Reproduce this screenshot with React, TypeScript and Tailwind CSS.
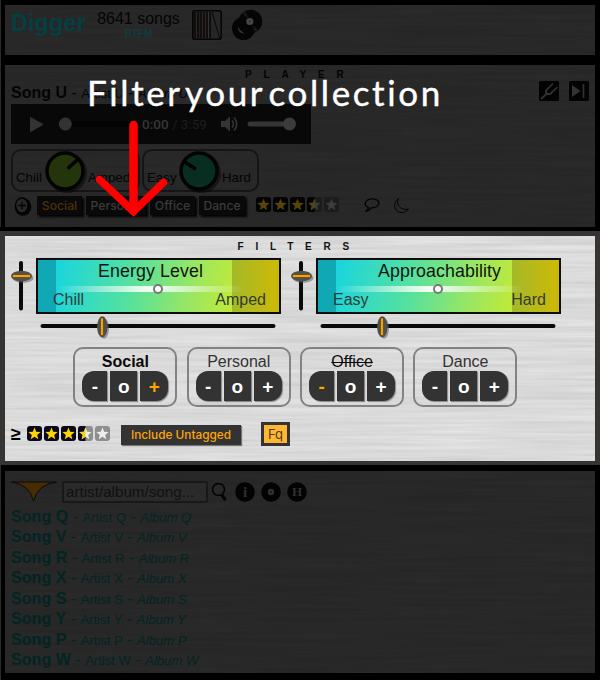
import React from "react";

const songs = ["Q", "V", "R", "X", "S", "Y", "P", "W"];

function Brushed({ id, dim }: { id: string; dim?: boolean }) {
  return (
    <svg className="pointer-events-none absolute inset-0 h-full w-full" aria-hidden="true">
      <filter id={id} x="0" y="0" width="100%" height="100%" colorInterpolationFilters="sRGB">
        <feTurbulence type="fractalNoise" baseFrequency="0.008 0.28" numOctaves="3" seed="4" />
        <feColorMatrix
          type="matrix"
          values={
            dim
              ? "0.03 0 0 0 0.141 0.03 0 0 0 0.141 0.03 0 0 0 0.141 0 0 0 0 1"
              : "0.12 0 0 0 0.8 0.12 0 0 0 0.796 0.12 0 0 0 0.796 0 0 0 0 1"
          }
        />
      </filter>
      <rect width="100%" height="100%" filter={`url(#${id})`} />
    </svg>
  );
}

const starPath = "M7.5 1.6 9.2 5.7 13.6 6 10.2 8.9 11.3 13.2 7.5 10.8 3.7 13.2 4.8 8.9 1.4 6 5.8 5.7Z";

function Stars({ dim }: { dim?: boolean }) {
  const dark = dim ? "#030303" : "#0a0a1c";
  const gold = dim ? "#57440a" : "#ffd400";
  const grey = dim ? "#1c1c1c" : "#8e8e8e";
  const pale = dim ? "#3c3c3c" : "#eeeeee";
  return (
    <div className="flex gap-[2px]">
      {[1, 1, 1, 0.5, 0].map((v, i) => (
        <svg key={i} width="15" height="15" viewBox="0 0 15 15">
          <rect width="15" height="15" rx="3" fill={v === 1 ? dark : grey} />
          {v === 0.5 && <path d="M3 0H7.5V15H3A3 3 0 0 1 0 12V3A3 3 0 0 1 3 0Z" fill={dark} />}
          <path d={starPath} fill={v === 1 ? gold : pale} />
          {v === 0.5 && <path d="M7.5 1.6V10.8L3.7 13.2 4.8 8.9 1.4 6 5.8 5.7Z" fill={gold} />}
        </svg>
      ))}
    </div>
  );
}

function Knob({ fill, angle }: { fill: string; angle: number }) {
  return (
    <svg width="44" height="44" viewBox="-21 -21 44 44" className="shrink-0">
      <circle cx="2" cy="2" r="20" fill="#000" opacity="0.45" />
      <circle r="18" fill={fill} stroke="#030303" strokeWidth="3.4" />
      <path d="M0-5V-17" stroke="#030303" strokeWidth="3.6" strokeLinecap="round" transform={`rotate(${angle})`} />
    </svg>
  );
}

function KnobBox({ low, high, fill, angle, cls }: { low: string; high: string; fill: string; angle: number; cls: string }) {
  return (
    <div className={`flex h-[43px] rounded-[10px] border-2 border-[#151515] text-[13.3px] text-[#040404] ${cls}`}>
      <span className="mt-[19px] leading-[16px]">{low}</span>
      <div className="-mt-[1px] h-[42px] w-[44px] shrink-0">
        <Knob fill={fill} angle={angle} />
      </div>
      <span className="mt-[19px] leading-[16px]">{high}</span>
    </div>
  );
}

function VSlider() {
  return (
    <svg width="28" height="56" viewBox="8 258 28 56" className="shrink-0">
      <path d="M21 263V308.500" stroke="#0a0a0a" strokeWidth="4" strokeLinecap="round" />
      <ellipse cx="23" cy="278" rx="10.500" ry="5" fill="#555" opacity=".5" />
      <ellipse cx="21.500" cy="276" rx="10.500" ry="5.200" fill="#505050" />
      <rect x="12.500" y="274.500" width="18" height="3" fill="#f5a20a" stroke="#2d2a22" strokeWidth=".5" />
    </svg>
  );
}

function FilterAxis({ name, low, high }: { name: string; low: string; high: string }) {
  return (
    <div className="w-[280px]">
      <div className="flex">
        <VSlider />
        <div className="relative h-[56px] w-[245px] border-2 border-[#0c0c0c] bg-[linear-gradient(100deg,#18d5df_7%,#58e19c_40%,#a0e75c_66%,#d1ec23_90%)]">
          <div className="absolute inset-y-0 left-0 w-[18px] bg-[#0d98a5] opacity-75" />
          <div className="absolute inset-y-0 right-0 w-[47px] bg-[linear-gradient(90deg,#a4b92a,#c8b90a_85%)]" />
          <div className="absolute top-[26px] left-[18px] h-[6px] w-[188px] bg-[linear-gradient(90deg,#ffffff00,#ffffffee_50%,#ffffff00)]" />
          <div className="absolute top-[24px] left-[115px] h-[10px] w-[10px] rounded-full border-2 border-[#777] bg-white" />
          <div className="relative pl-[60px] pt-[1px] text-[17.8px] leading-[20px] tracking-[0.1px] text-[#101410]">{name}</div>
          <div className="relative mt-[9px] flex justify-between pr-[13px] pl-[15px] text-[16px] leading-[20px] text-[#353a35]">
            <span>{low}</span>
            <span>{high}</span>
          </div>
        </div>
      </div>
      <svg width="280" height="26" viewBox="8 314 280 26" className="block">
        <path d="M42.500 326H273.500" stroke="#0a0a0a" strokeWidth="4" strokeLinecap="round" />
        <ellipse cx="104" cy="328.500" rx="5" ry="10.300" fill="#555" opacity=".5" />
        <ellipse cx="102.300" cy="326.800" rx="5.200" ry="10.500" fill="#505050" />
        <rect x="100.500" y="318" width="3" height="17.500" fill="#f5a20a" stroke="#2d2a22" strokeWidth=".5" />
      </svg>
    </div>
  );
}

function TagFilter({ name, state }: { name: string; state: string }) {
  const label =
    state === "+" ? "font-bold text-[#0a0a0a]" : state === "-" ? "line-through text-[#0a0a0a]" : "text-[#333]";
  return (
    <div className="flex h-[60px] w-[104px] flex-col items-center rounded-[10px] border-2 border-[#828282]">
      <div className={`mt-[3px] text-[16px] leading-[20px] ${label}`}>{name}</div>
      <div className="-mt-[1px] flex gap-[3px] text-[19px] leading-[31px] font-bold text-white">
        {["-", "o", "+"].map((c) => (
          <div
            key={c}
            className={`h-[30px] bg-[#333] text-center shadow-[1px_1px_1px_#888] ${
              c === "-" ? "w-[25px] rounded-l-[12px]" : c === "o" ? "w-[27px]" : "w-[28px] rounded-r-[12px]"
            } ${c === state ? "text-[#ffa500]" : ""}`}
          >
            {c}
          </div>
        ))}
      </div>
    </div>
  );
}

function Header() {
  return (
    <header className="relative h-[50px] bg-[#282828]">
      <Brushed id="metal-head" dim />
      <div className="relative flex pl-[6px]">
        <div className="w-[86px] pt-[5px] text-[23.6px] leading-[26px] font-bold text-[#043f41]">Digger</div>
        <div className="flex w-[83px] flex-col items-center pt-[5px]">
          <span className="text-[16px] leading-[18px] whitespace-nowrap text-[#040404]">8641 songs</span>
          <span className="text-[10px] leading-[11px] text-[#044648]">RTFM</span>
        </div>
        <svg width="30" height="30" viewBox="0 0 30 30" className="mt-[5px] ml-[12px]">
          <rect x=".8" y=".8" width="28.400" height="28.400" rx="2" fill="#262626" stroke="#050505" strokeWidth="1.600" />
          <path d="M3 2V28M6 2V28M9 2V28M12 2V28M15 2V28M18 2V28" stroke="#080808" strokeWidth="1.500" />
          <path d="M4.500 2V28" stroke="#35261b" />
          <path d="M7.500 2V28" stroke="#10252c" />
          <path d="M10.500 2V28M13.500 2V28" stroke="#3a2020" />
          <path d="M16.500 2V28" stroke="#3a3430" />
          <path d="M20 2 27.500 28" stroke="#080808" />
        </svg>
        <svg width="32" height="32" viewBox="0 0 32 32" className="mt-[4px] ml-[9px]">
          <circle cx="12.500" cy="19.500" r="11.500" fill="#050505" />
          <path d="M6.500 17.500Q7 24 13.500 24.500Q8.500 21.500 6.500 17.500Z" fill="#383838" />
          <circle cx="19.500" cy="12.500" r="11.800" fill="#050505" />
          <path d="M17.500 10 11.500 4.500A12 12 0 0 1 14.500 2.200Z M20.500 15 24 23A12 12 0 0 0 27 21Z" fill="#181818" />
          <circle cx="18.800" cy="12.500" r="3.600" fill="#454545" />
          <circle cx="18.800" cy="12.500" r=".8" fill="#222" />
        </svg>
      </div>
    </header>
  );
}

function AudioBar() {
  return (
    <div className="flex h-[40px] w-[300px] items-center bg-[#080808] font-['Roboto',sans-serif] text-[13.5px]">
      <svg width="130" height="40" viewBox="0 0 130 40">
        <path d="M19.500 13.500V27.500L32 20.500Z" fill="#333" stroke="#333" strokeLinejoin="round" />
        <path d="M54 20H124" stroke="#030303" strokeWidth="5" />
        <circle cx="54.300" cy="20" r="6.500" fill="#333" />
      </svg>
      <span className="w-[80px] whitespace-nowrap">
        <span className="pl-[1px] font-medium text-[#363636]">0:00</span>
        <span className="text-[#1e1e1e]"> / 3:59</span>
      </span>
      <svg width="90" height="40" viewBox="0 0 90 40">
        <path d="M0 17H4L9 12.500V27.500L4 23H0Z" fill="#353535" />
        <path d="M11 16.500Q14 20 11 23.500M13 13.500Q18.500 20 13 26.500" fill="none" stroke="#353535" strokeWidth="1.600" />
        <path d="M29 20H66" stroke="#353535" strokeWidth="5" strokeLinecap="round" />
        <circle cx="68.500" cy="20" r="6.500" fill="#3b3b3b" />
      </svg>
    </div>
  );
}

function Player() {
  const pill = "h-[19px] bg-[#090909] text-center text-[12.2px] leading-[19px] font-medium font-['Inter',sans-serif] shadow-[2px_2px_2px_#030303]";
  return (
    <section className="relative mt-[10px] h-[162px] bg-[#292929]">
      <Brushed id="metal-player" dim />
      <div className="relative pl-[6px]">
        <div className="h-[17px] pt-[5px] pl-[234px] text-[10px] leading-[10px] font-bold tracking-[11.800px] text-[#030303]">PLAYER</div>
        <div className="flex h-[22px] justify-between pr-[6px]">
          <div className="text-[13px] leading-[21px] whitespace-pre text-[#040404]">
            <b className="text-[16px]">Song U</b>
            <span className="text-[16px]"> - </span>Artist U<span className="text-[16px]"> - </span>
            <i>Album U</i>
          </div>
          <div className="-mt-[1px] flex gap-[10px]">
            <svg width="20" height="20" viewBox="0 0 20 20">
              <rect width="20" height="20" rx="1.500" fill="#030303" />
              <path d="M2.500 17.500 8 12.500M13.500 3 7.800 8.500Q6 11 7.800 12.500T12 12.200L18 6.500" fill="none" stroke="#333" strokeWidth="1.700" strokeLinecap="round" />
            </svg>
            <svg width="20" height="20" viewBox="0 0 20 20">
              <rect width="20" height="20" rx="1.500" fill="#030303" />
              <path d="M3 4V16L11.500 10Z" fill="#333" />
              <path d="M14.500 3V17" stroke="#333" strokeWidth="1.600" />
            </svg>
          </div>
        </div>
        <AudioBar />
        <div className="mt-[5px] flex gap-[2px]">
          <KnobBox low="Chill" high="Amped" fill="#24340b" angle={48} cls="w-[129px] pl-[3px] [&>span:first-child]:w-[28px]" />
          <KnobBox low="Easy" high="Hard" fill="#082d21" angle={-58} cls="w-[117px] pl-[3px] [&>span:first-child]:w-[31px]" />
        </div>
        <div className="mt-[4px] flex items-start">
          <svg width="18" height="20" viewBox="0 0 18 20" className="ml-[3px]">
            <ellipse cx="9" cy="10.800" rx="8.300" ry="9" fill="#050505" />
            <ellipse cx="7.800" cy="9.500" rx="6.200" ry="7.500" fill="#272727" stroke="#030303" strokeWidth="1.300" />
            <path d="M4.200 9.500H11.800M8 5.700V13.300" stroke="#030303" strokeWidth="1.300" />
          </svg>
          <div className={`${pill} ml-[5px] w-[45px] text-[#4f3008]`}>Social</div>
          <div className={`${pill} ml-[4px] w-[60px] text-[#3b3b3b]`}>Personal</div>
          <div className={`${pill} ml-[4px] w-[45px] text-[#3b3b3b]`}>Office</div>
          <div className={`${pill} ml-[4px] w-[46px] text-[#3b3b3b]`}>Dance</div>
          <div className="mt-[1px] ml-[11px]">
            <Stars dim />
          </div>
          <svg width="48" height="18" viewBox="0 0 48 18" className="mt-[1px] ml-[25px]" fill="none" stroke="#030303" strokeWidth="1.300">
            <path d="M4.500 10.500C0 9 0 3.500 6 2.200C12 1 16 4 14.500 7.500C13.500 9.500 10.500 10.800 7 10.800Q5.500 14 1.500 14.500Q4.500 12.500 4.500 10.500Z" />
            <path d="M34.500 1.500C28.500 5.500 29.500 14.500 37 15.500C40.500 16 43.500 14 44.500 12C37 14 31.500 8 34.500 1.500Z" strokeWidth="1" />
          </svg>
        </div>
      </div>
    </section>
  );
}

function Filters() {
  return (
    <section className="relative h-[225px] bg-[#ddd]">
      <Brushed id="metal-filters" />
      <div className="relative">
        <div className="h-[22px] pt-[5px] pl-[232.500px] text-[10px] leading-[11px] font-bold tracking-[11.800px] text-[#111]">FILTERS</div>
        <div className="flex pl-[3px]">
          <FilterAxis name="Energy Level" low="Chill" high="Amped" />
          <FilterAxis name="Approachability" low="Easy" high="Hard" />
        </div>
        <div className="mt-[7px] ml-[68.400px] flex w-[444px] justify-between">
          <TagFilter name="Social" state="+" />
          <TagFilter name="Personal" state="" />
          <TagFilter name="Office" state="-" />
          <TagFilter name="Dance" state="" />
        </div>
        <div className="mt-[15px] flex pl-[6px]">
          <div className="w-[16px] pt-[3px] text-[18px] leading-[18px] font-bold text-black">≥</div>
          <div className="mt-[4px]">
            <Stars />
          </div>
          <div className="mt-[3px] ml-[11px] h-[20px] w-[120px] bg-[#333] text-center font-['Inter',sans-serif] text-[11.8px] leading-[20px] font-medium whitespace-nowrap text-[#ffa500] shadow-[1px_1px_1px_#777]">
            Include Untagged
          </div>
          <div className="ml-[20px] h-[24px] w-[29px] border-[3px] border-[#333] bg-[#ffb733] text-center font-['Inter',sans-serif] text-[13px] leading-[19px] text-[#4a3c20]">
            Fq
          </div>
        </div>
      </div>
    </section>
  );
}

function SongList() {
  return (
    <section className="relative h-[202px] bg-[#262626]">
      <Brushed id="metal-list" dim />
      <div className="relative pl-[6px]">
        <div className="flex h-[34px] items-start pt-[10px]">
          <svg width="46" height="22" viewBox="0 0 46 22">
            <path d="M.5 1H45.500Q27 3 22.500 20Q18 3 .5 1Z" fill="#452c03" stroke="#0b0b0b" />
          </svg>
          <div className="ml-[5px] h-[22px] w-[146px] rounded-[2px] border-2 border-[#181818] bg-[#2a2a2a] pl-[2px] text-[15.200px] leading-[18px] text-[#111]">
            artist/album/song...
          </div>
          <svg width="18" height="22" viewBox="0 0 18 22" className="ml-[3px]" fill="none" stroke="#030303">
            <circle cx="7.500" cy="8.500" r="6" strokeWidth="1.600" />
            <path d="M10.500 13.500 14.500 19" strokeWidth="3" />
          </svg>
          <div className="mt-[1px] ml-[6px] flex gap-[6px]">
            <svg width="20" height="20" viewBox="0 0 20 20">
              <circle cx="10" cy="10" r="9.800" fill="#030303" />
              <text x="10" y="14.500" textAnchor="middle" className="fill-[#303030] font-['Liberation_Serif',serif] text-[15px] font-bold">i</text>
            </svg>
            <svg width="20" height="20" viewBox="0 0 20 20">
              <circle cx="10" cy="10" r="9.800" fill="#030303" />
              <circle cx="10" cy="10" r="3.200" fill="#303030" />
              <circle cx="10" cy="10" r=".8" fill="#050505" />
            </svg>
            <svg width="20" height="20" viewBox="0 0 20 20">
              <circle cx="10" cy="10" r="9.800" fill="#030303" />
              <text x="10" y="14" textAnchor="middle" className="fill-[#303030] font-['Liberation_Serif',serif] text-[13px] font-bold">H</text>
            </svg>
          </div>
        </div>
        <ul className="pt-[1px]">
          {songs.map((s) => (
            <li key={s} className="h-[20.430px] text-[13.100px] leading-[20.430px] whitespace-pre text-[#022423]">
              <b className="text-[16.100px]">Song {s}</b>
              <span className="text-[16px]"> - </span>Artist {s}
              <span className="text-[16px]"> - </span>
              <i>Album {s}</i>
            </li>
          ))}
        </ul>
      </div>
    </section>
  );
}

export default function App() {
  return (
    <main className="relative h-[680px] w-[600px] overflow-hidden bg-black font-['Liberation_Sans',Arial,sans-serif]">
      <div className="border-l border-[#2b2b2b] pt-[5px] pr-[5px] pl-[4px]">
        <Header />
        <Player />
      </div>
      <div className="mt-[4px] bg-[#363433] px-[5px] pt-[5px] pb-[4px]">
        <Filters />
      </div>
      <div className="border-l border-[#2b2b2b] pt-[6px] pr-[5px] pb-[7px] pl-[4px]">
        <SongList />
      </div>
      <div className="absolute top-[71px] left-[87px] font-['Lato',sans-serif] text-[35px] leading-[42px] tracking-[2.6px] whitespace-nowrap text-white [-webkit-text-stroke:0.4px_white] [word-spacing:-7.500px]">
        Filter your collection
      </div>
      <svg className="absolute top-[115px] left-[90px]" width="84" height="110" viewBox="90 115 84 110" fill="none" stroke="#f00">
        <path d="M133.500 125V211" strokeWidth="8.500" strokeLinecap="round" />
        <path d="M99.500 179.500 133.500 211.500 163.500 182.500" strokeWidth="7.500" strokeLinecap="round" />
      </svg>
    </main>
  );
}
